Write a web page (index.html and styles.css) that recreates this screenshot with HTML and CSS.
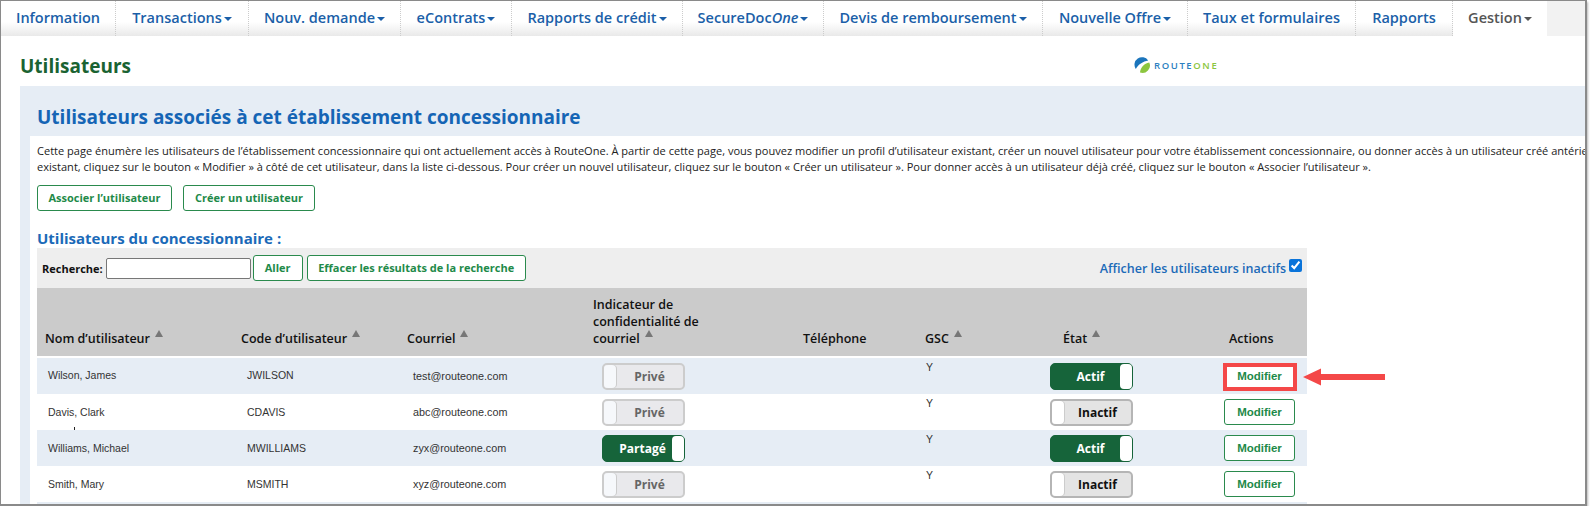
FILE: index.html
```html
<!DOCTYPE html>
<html lang="fr">

<head>
    <meta charset="UTF-8">
    <title>Utilisateurs</title>
    <link rel="stylesheet" href="styles.css">
</head>

<body>
    <div class="frame">
        <ul class="nav">
            <li style="width: 115px"><a href="#">Information</a></li>
            <li style="width: 133px"><a href="#">Transactions<i class="caret"></i></a></li>
            <li style="width: 152px"><a href="#">Nouv. demande<i class="caret"></i></a></li>
            <li style="width: 111px"><a href="#">eContrats<i class="caret"></i></a></li>
            <li style="width: 171px"><a href="#">Rapports de crédit<i class="caret"></i></a></li>
            <li style="width: 141px"><a href="#">SecureDoc<em>One</em><i class="caret"></i></a></li>
            <li style="width: 219px"><a href="#">Devis de remboursement<i class="caret"></i></a></li>
            <li style="width: 145px"><a href="#">Nouvelle Offre<i class="caret"></i></a></li>
            <li style="width: 168px"><a href="#">Taux et formulaires</a></li>
            <li style="width: 97px"><a href="#">Rapports</a></li>
            <li class="select" style="width: 94px"><a href="#">Gestion<i class="caret"></i></a></li>
        </ul>
        <div class="nav-rest"></div>

        <div class="top">
            <h1>Utilisateurs</h1>
            <div class="logo">
                <svg width="17" height="17" viewBox="0 0 17 17">
                    <path d="M1.800 12A7.500 7.500 0 0 1 14.200 3.500C9 4.500 4 7.500 1.800 12Z" fill="#1b75bc" />
                    <path d="M15.300 5.500A7.500 7.500 0 0 1 6 15.600C6.500 10.500 10 6.500 15.300 5.500Z" fill="#8cc63f" />
                </svg>
                <span class="logo-a">ROUTE</span><span class="logo-b">ONE</span>
            </div>
        </div>

        <div class="panel">
            <h2>Utilisateurs associés à cet établissement concessionnaire</h2>
            <div class="content">
                <p class="intro">Cette page énumère les utilisateurs de l’établissement concessionnaire qui ont actuellement accès à RouteOne. À partir de cette page, vous pouvez modifier un profil d’utilisateur existant, créer un nouvel utilisateur pour votre établissement concessionnaire, ou donner accès à un utilisateur créé antérieurement. Pour modifier un utilisateur<br>existant, cliquez sur le bouton « Modifier » à côté de cet utilisateur, dans la liste ci-dessous. Pour créer un nouvel utilisateur, cliquez sur le bouton « Créer un utilisateur ». Pour donner accès à un utilisateur déjà créé, cliquez sur le bouton « Associer l’utilisateur ».</p>
                <div class="actions">
                    <a class="btn btn-assoc" href="#">Associer l’utilisateur</a>
                    <a class="btn btn-create" href="#">Créer un utilisateur</a>
                </div>
                <h3>Utilisateurs du concessionnaire :</h3>
                <div class="users">
                    <div class="search">
                        <label>Recherche:</label>
                        <input type="text">
                        <a class="btn btn-go" href="#">Aller</a>
                        <a class="btn btn-clear" href="#">Effacer les résultats de la recherche</a>
                        <label class="inactive">Afficher les utilisateurs inactifs<input type="checkbox" checked></label>
                    </div>
                    <table>
                        <thead>
                            <tr>
                                <th class="c-name">Nom d’utilisateur<i class="sort"></i></th>
                                <th class="c-code">Code d’utilisateur<i class="sort"></i></th>
                                <th class="c-mail">Courriel<i class="sort"></i></th>
                                <th class="c-priv">Indicateur de<br>confidentialité de<br>courriel<i class="sort"></i></th>
                                <th class="c-tel">Téléphone</th>
                                <th class="c-gsc">GSC<i class="sort"></i></th>
                                <th class="c-state">État<i class="sort"></i></th>
                                <th class="c-act">Actions</th>
                            </tr>
                        </thead>
                        <tbody>
                            <tr class="odd">
                                <td class="c-name">Wilson, James</td>
                                <td class="c-code">JWILSON</td>
                                <td class="c-mail">test@routeone.com</td>
                                <td class="c-priv"><div class="toggle off"><b></b><span>Privé</span></div></td>
                                <td></td>
                                <td class="c-gsc">Y</td>
                                <td class="c-state"><div class="toggle on"><span>Actif</span><b></b></div></td>
                                <td class="c-act">
                                    <a class="btn btn-edit" href="#">Modifier</a>
                                    <div class="callout"></div>
                                    <svg class="arrow" width="82" height="18" viewBox="0 0 82 18">
                                        <path d="M0 9L18 0.500V6H82V12H18V17.500Z" fill="#f44848" />
                                    </svg>
                                </td>
                            </tr>
                            <tr>
                                <td class="c-name">Davis, Clark<i class="speck"></i></td>
                                <td class="c-code">CDAVIS</td>
                                <td class="c-mail">abc@routeone.com</td>
                                <td class="c-priv"><div class="toggle off"><b></b><span>Privé</span></div></td>
                                <td></td>
                                <td class="c-gsc">Y</td>
                                <td class="c-state"><div class="toggle idle"><b></b><span>Inactif</span></div></td>
                                <td class="c-act"><a class="btn btn-edit" href="#">Modifier</a></td>
                            </tr>
                            <tr class="odd">
                                <td class="c-name">Williams, Michael</td>
                                <td class="c-code">MWILLIAMS</td>
                                <td class="c-mail">zyx@routeone.com</td>
                                <td class="c-priv"><div class="toggle on"><span>Partagé</span><b></b></div></td>
                                <td></td>
                                <td class="c-gsc">Y</td>
                                <td class="c-state"><div class="toggle on"><span>Actif</span><b></b></div></td>
                                <td class="c-act"><a class="btn btn-edit" href="#">Modifier</a></td>
                            </tr>
                            <tr>
                                <td class="c-name">Smith, Mary</td>
                                <td class="c-code">MSMITH</td>
                                <td class="c-mail">xyz@routeone.com</td>
                                <td class="c-priv"><div class="toggle off"><b></b><span>Privé</span></div></td>
                                <td></td>
                                <td class="c-gsc">Y</td>
                                <td class="c-state"><div class="toggle idle"><b></b><span>Inactif</span></div></td>
                                <td class="c-act"><a class="btn btn-edit" href="#">Modifier</a></td>
                            </tr>
                            <tr class="odd cut">
                                <td colspan="8"></td>
                            </tr>
                        </tbody>
                    </table>
                </div>
            </div>
        </div>
    </div>
</body>

</html>
```

FILE: styles.css
```css
* {
    margin: 0;
    padding: 0;
    list-style: none;
    box-sizing: border-box;
}

body {
    background-color: white;
    font-family: "Open Sans", "Liberation Sans", sans-serif;
    overflow: hidden;
}

a {
    text-decoration: none;
}

.frame {
    position: relative;
    width: 1587px;
    height: 506px;
    border: 1px solid #8a8a8a;
    border-width: 1px 2px 2px 1px;
    box-shadow: 1px 2px 2px #bbb;
    overflow: hidden;
}

/* top menu */
.nav {
    display: flex;
    height: 35px;
    width: 1546px;
    float: left;
}

.nav li {
    height: 35px;
    line-height: 33px;
    text-align: center;
    font-size: 14.500px;
    font-weight: 600;
    white-space: nowrap;
    border-right: 1px dotted #ccc;
    background: linear-gradient(#fff 60%, #e9e9e9);
}

.nav li a {
    color: #1b5fa8;
    display: block;
}

.nav em {
    font-style: italic;
}

.nav .select {
    background: white;
    border-right: 0;
}

.nav .select a {
    color: #555;
}

.nav-rest {
    height: 35px;
    margin-left: 1546px;
    background-color: #f2f2f2;
    background-image: radial-gradient(#ccc 0.5px, transparent 0.6px);
    background-size: 2px 2px;
}

.caret {
    display: inline-block;
    margin-left: 2px;
    vertical-align: 2px;
    border-top: 4px solid currentColor;
    border-left: 4px solid transparent;
    border-right: 4px solid transparent;
}

/* page title and logo */
.top {
    display: flex;
    height: 50px;
    padding: 9px 0 0 19px;
    align-items: center;
}

h1 {
    width: 1114px;
    font-size: 19px;
    font-weight: 700;
    color: #1a6332;
}

.logo {
    display: flex;
    align-items: center;
    font-size: 9.500px;
    font-weight: 600;
    letter-spacing: 1.600px;
}

.logo svg {
    margin-right: 3px;
}

.logo-a {
    color: #2b7fc1;
}

.logo-b {
    color: #8cc63f;
}

/* blue panel */
.panel {
    width: 1600px;
    height: 420px;
    margin-left: 19px;
    padding-left: 10px;
    background-color: #e6edf5;
}

h2 {
    height: 50px;
    padding: 17px 0 0 7px;
    font-size: 19px;
    line-height: 28px;
    font-weight: 700;
    color: #1565b5;
    white-space: nowrap;
}

.content {
    height: 370px;
    padding: 7px 0 0 7px;
    background-color: white;
}

.intro {
    height: 34px;
    font-size: 11.050px;
    line-height: 16px;
    color: #222;
    white-space: nowrap;
}

.btn {
    display: block;
    height: 26px;
    line-height: 24px;
    text-align: center;
    font-size: 11px;
    font-weight: 700;
    color: #1e8a49;
    background-color: white;
    border: 1px solid #2a8a4d;
    border-radius: 3px;
    white-space: nowrap;
}

.actions {
    display: flex;
    gap: 11px;
    margin-top: 8px;
}

.btn-assoc {
    width: 135px;
}

.btn-create {
    width: 132px;
}

h3 {
    margin-top: 17px;
    font-size: 15px;
    line-height: 20px;
    font-weight: 700;
    color: #1b6ab8;
}

/* user list */
.users {
    width: 1270px;
}

.search {
    display: flex;
    align-items: center;
    height: 40px;
    padding-left: 5px;
    background-color: #eee;
}

.search label {
    font-size: 11px;
    font-weight: 700;
    color: #111;
}

.search input[type="text"] {
    width: 145px;
    height: 21px;
    margin: 0 2px 0 3px;
    border: 1px solid #777;
    border-radius: 2px;
}

.btn-go {
    width: 50px;
    margin-right: 4px;
}

.btn-clear {
    width: 219px;
}

.search .inactive {
    display: flex;
    align-items: center;
    margin-left: auto;
    padding-right: 5px;
    font-size: 12.500px;
    font-weight: 600;
    color: #1b6ab8;
}

.inactive input {
    width: 13px;
    height: 13px;
    margin: -6px 0 0 3px;
    accent-color: #0a74da;
}

table {
    width: 1270px;
    table-layout: fixed;
    border-collapse: collapse;
}

th {
    height: 67px;
    padding: 0 0 9px 8px;
    background-color: #cbcbcb;
    border-bottom: 2px solid white;
    text-align: left;
    vertical-align: bottom;
    font-size: 12.500px;
    line-height: 17px;
    font-weight: 600;
    color: #111;
}

thead tr {
    height: 69px;
}

th.c-name {
    width: 196px;
}

th.c-code {
    width: 166px;
}

th.c-mail {
    width: 186px;
}

th.c-priv {
    width: 210px;
}

th.c-tel {
    width: 122px;
}

th.c-gsc {
    width: 126px;
}

th.c-state {
    width: 165px;
    padding-left: 20px;
}

th.c-act {
    padding-left: 21px;
}

.sort {
    display: inline-block;
    margin-left: 5px;
    vertical-align: 6px;
    border-bottom: 7px solid #777;
    border-left: 4px solid transparent;
    border-right: 4px solid transparent;
}

td {
    height: 36px;
    font-family: "Liberation Sans", sans-serif;
    font-size: 10.500px;
    color: #333;
    position: relative;
}

tr.odd td {
    background-color: #e6edf5;
}

tbody tr:first-child td {
    height: 37px;
}

tbody tr:first-child td.c-name,
tbody tr:first-child td.c-code {
    padding-bottom: 3px;
}

td.c-name {
    padding-left: 11px;
}

td.c-code,
td.c-mail {
    padding-left: 14px;
}

td.c-mail {
    font-size: 10.800px;
}

td.c-priv {
    padding-left: 17px;
}

td.c-gsc {
    padding: 3px 0 0 9px;
    vertical-align: top;
}

td.c-state {
    padding-left: 7px;
}

td.c-act {
    padding-left: 16px;
}

.cut td {
    height: 4px;
}

/* switches */
.toggle {
    display: flex;
    align-items: center;
    width: 83px;
    height: 27px;
    border-radius: 5px;
    font-family: "Open Sans", sans-serif;
    font-size: 12px;
    font-weight: 700;
}

.toggle b {
    width: 12px;
    height: 100%;
    background-color: white;
    border-radius: 4px;
    flex: none;
}

.toggle span {
    flex: 1;
    text-align: center;
}

.off {
    background-color: #e9e9ec;
    border: 2px solid #ccc;
    color: #666;
}

.off b {
    background-color: #f6f8fb;
    box-shadow: 1px 0 0 #ccc;
}

.idle {
    background-color: #e4e4e4;
    border: 2px solid #b5b5b5;
    color: #111;
}

.idle b {
    box-shadow: 1px 0 0 #ccc;
}

.on {
    background-color: #16643a;
    border: 1px solid #16643a;
    color: white;
}

.on span {
    padding-left: 10px;
}

.btn-edit {
    width: 71px;
    font-size: 11.500px;
}

/* annotation over the first row */
.callout {
    position: absolute;
    left: 15px;
    top: 5px;
    width: 74px;
    height: 28px;
    border: 4px solid #f44848;
}

.arrow {
    position: absolute;
    left: 95px;
    top: 10px;
}

.speck {
    position: absolute;
    left: 37px;
    top: 33px;
    width: 1px;
    height: 3px;
    background-color: #222;
}
```
